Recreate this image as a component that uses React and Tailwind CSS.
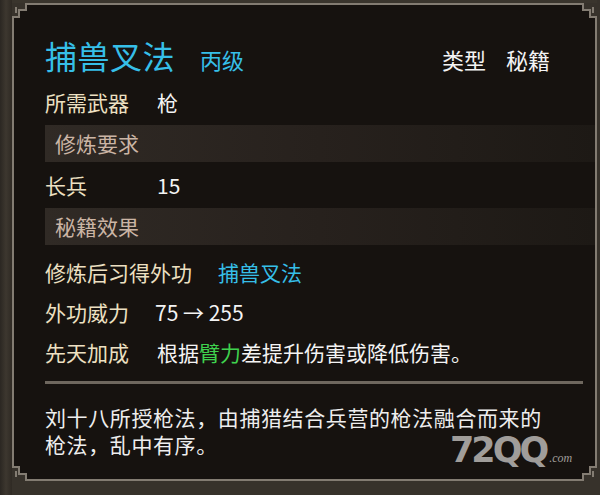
import React from 'react';

// Notched fret corner drawn over the panel border
function Corner({ className }) {
  return (
    <svg
      width="26"
      height="26"
      viewBox="0 0 26 26"
      className={`absolute ${className}`}
    >
      <polygon points="0,0 14,0 14,6 6,6 6,14 0,14" fill="#37322b" />
      <path
        d="M1 26 V14 H7 V7 H14 V1 H26"
        fill="none"
        stroke="#837c72"
        strokeWidth="2"
      />
      <path d="M4 4 V10" stroke="#837c72" strokeWidth="2" />
    </svg>
  );
}

function Row({ label, children, labelClass = 'w-[112px]', className = 'h-[40px]' }) {
  return (
    <div className={`flex items-center ${className}`}>
      <span className={`${labelClass} shrink-0 text-[#ede0c2]`}>{label}</span>
      {children}
    </div>
  );
}

function SectionBar({ children, className = '' }) {
  return (
    <div
      className={`flex h-[37px] items-center bg-gradient-to-r from-[#302a25] via-[#27211d] to-[#1d1915] pl-[10px] text-[#cbb5a5] ${className}`}
    >
      {children}
    </div>
  );
}

export default function App() {
  return (
    <div className="h-[495px] w-[600px] overflow-hidden bg-[#37322b] font-['Noto_Sans_CJK_SC',sans-serif] text-[21px] leading-none">
      <div className="flex h-full">
        {/* inventory strip peeking out at the left */}
        <div className="h-full w-[12px] shrink-0 bg-gradient-to-r from-[#2b2722] via-[#3d372f] to-[#2f2a24]" />

        <div className="flex flex-col">
          <div className="h-[3px] bg-[#3a352d]" />

          <div className="relative h-[478px] w-[585px] border-2 border-[#837c72] bg-[#16120f] pl-[31px]">
            <Corner className="-left-[2px] -top-[2px]" />
            <Corner className="-right-[2px] -top-[2px] -scale-x-100" />
            <Corner className="-bottom-[2px] -left-[2px] -scale-y-100" />
            <Corner className="-bottom-[2px] -right-[2px] -scale-100" />

            {/* header */}
            <div className="mt-[30px] flex h-[40px] items-center pr-[45px]">
              <span className="text-[32px] tracking-[0.5px] text-[#36bfe8]">捕兽叉法</span>
              <span className="ml-[25px] mt-[8px] text-[22px] text-[#36bfe8]">丙级</span>
              <div className="ml-auto mt-[8px] flex gap-[20px] text-[22px] text-[#f4f4f4]">
                <span>类型</span>
                <span>秘籍</span>
              </div>
            </div>

            <Row label="所需武器" className="mt-[7px] h-[40px]">
              <span className="text-[#f4f4f4]">枪</span>
            </Row>

            <SectionBar className="mt-[3px]">修炼要求</SectionBar>

            <Row label="长兵" className="mt-[3px] h-[40px]">
              <span className="text-[#f4f4f4]">15</span>
            </Row>

            <SectionBar className="mt-[3px]">秘籍效果</SectionBar>

            <Row label="修炼后习得外功" labelClass="w-[173px]" className="mt-[7px] h-[40px]">
              <span className="text-[#36bfe8]">捕兽叉法</span>
            </Row>

            <Row label="外功威力" labelClass="w-[110px]">
              <span className="text-[#f4f4f4]">75 → 255</span>
            </Row>

            <Row label="先天加成">
              <span className="text-[#f4f4f4]">
                根据<span className="text-[#3fd24e]">臂力</span>差提升伤害或降低伤害。
              </span>
            </Row>

            <div className="mr-[12px] mt-[9px] h-[3px] bg-[#6e675e]" />

            <div className="mt-[20px] tracking-[0.6px] text-[#eeeeee]">
              <div className="flex h-[27px] items-center">刘十八所授枪法，由捕猎结合兵营的枪法融合而来的</div>
              <div className="flex h-[27px] items-center">枪法，乱中有序。</div>
            </div>

            {/* site watermark */}
            <div className="absolute left-[436px] top-[428px] flex items-end text-[#a09d9a]">
              <span className="font-['DejaVu_Sans',sans-serif] text-[35px] font-bold tracking-[-3px]">
                72QQ
              </span>
              <span className="mb-[4px] ml-[3px] font-['Liberation_Serif',serif] text-[12px] italic">
                .com
              </span>
            </div>
          </div>
        </div>
      </div>
    </div>
  );
}
